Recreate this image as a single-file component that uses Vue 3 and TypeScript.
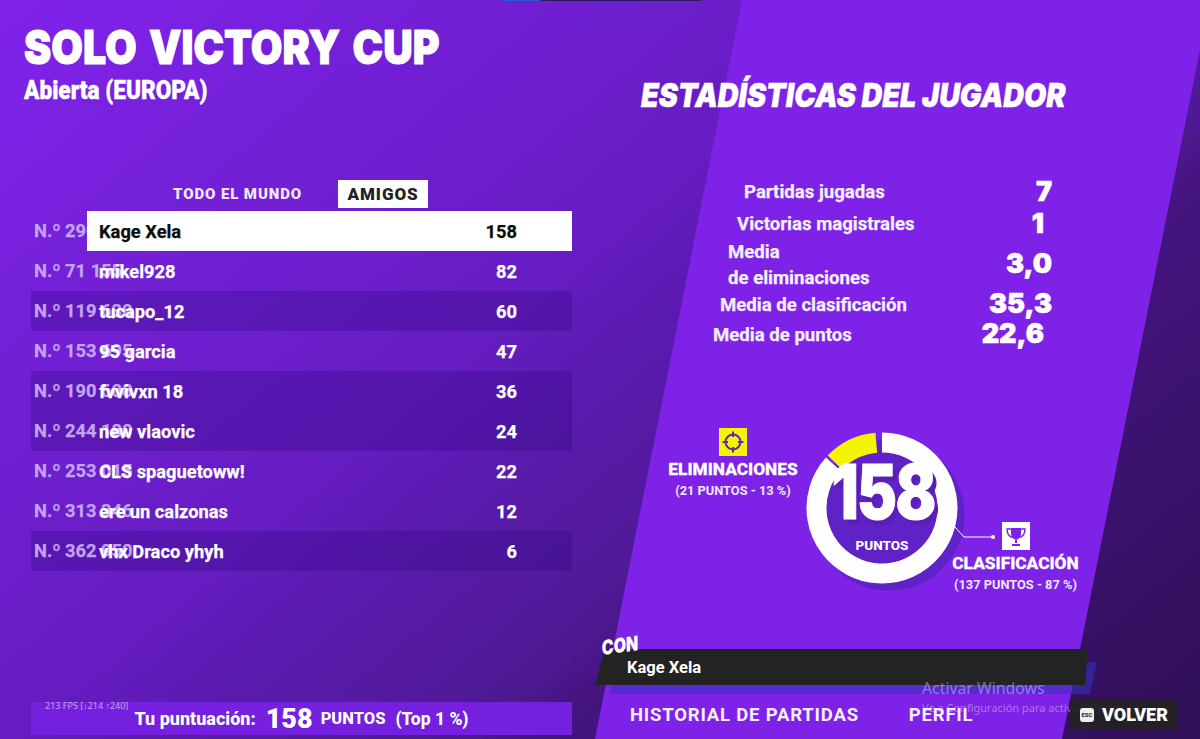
<script setup lang="ts">
interface Row { rank: string; name: string; score: number; dark?: boolean; self?: boolean }
interface Stat { label: string[]; value: string; left: number; right: number; height: number; shift: number }

const rows: Row[] = [
  { rank: 'N.º 290 000', name: 'Kage Xela', score: 158, self: true },
  { rank: 'N.º 71 155', name: 'mikel928', score: 82 },
  { rank: 'N.º 119 630', name: 'tucapo_12', score: 60, dark: true },
  { rank: 'N.º 153 695', name: '95 garcia', score: 47 },
  { rank: 'N.º 190 608', name: 'fvvivxn 18', score: 36, dark: true },
  { rank: 'N.º 244 180', name: 'new vlaovic', score: 24, dark: true },
  { rank: 'N.º 253 015', name: 'CLS spaguetoww!', score: 22 },
  { rank: 'N.º 313 346', name: 'ere un calzonas', score: 12 },
  { rank: 'N.º 362 950', name: 'vhx Draco yhyh', score: 6, dark: true }
]

const stats: Stat[] = [
  { label: ['Partidas jugadas'], value: '7', left: 144, right: 148, height: 32, shift: -1 },
  { label: ['Victorias magistrales'], value: '1', left: 137, right: 156, height: 32, shift: 0 },
  { label: ['Media', 'de eliminaciones'], value: '3,0', left: 128, right: 148, height: 50, shift: -2 },
  { label: ['Media de clasificación'], value: '35,3', left: 120, right: 148, height: 30, shift: -2 },
  { label: ['Media de puntos'], value: '22,6', left: 113, right: 156, height: 30, shift: -2 }
]

const R = 65.5
function polar(deg: number): string {
  const a = ((deg - 90) * Math.PI) / 180
  return `${(80 + R * Math.cos(a)).toFixed(2)} ${(80 + R * Math.sin(a)).toFixed(2)}`
}
function arc(from: number, to: number): string {
  const large = to - from > 180 ? 1 : 0
  return `M${polar(from)} A${R} ${R} 0 ${large} 1 ${polar(to)}`
}
const whiteArc = arc(0, 312)
const yellowArc = arc(314, 355)
</script>

<template>
  <div class="screen">
    <div class="panel"></div>
    <div class="top-strip"><i class="blue"></i><i class="navy"></i></div>

    <section class="left">
      <h1 class="title">SOLO VICTORY CUP</h1>
      <p class="subtitle">Abierta (EUROPA)</p>

      <div class="tabs">
        <span class="tab">TODO EL MUNDO</span>
        <span class="tab active">AMIGOS</span>
      </div>

      <div class="table">
        <div v-for="r in rows" :key="r.name" class="row" :class="{ dark: r.dark, self: r.self }">
          <span class="rank">{{ r.rank }}</span>
          <div class="cells">
            <span class="name">{{ r.name }}</span>
            <span class="score">{{ r.score }}</span>
          </div>
        </div>
      </div>

      <div class="total">
        <span class="fps">213 FPS [↓214 ↑240]</span>
        <span class="t-label">Tu puntuación:</span>
        <span class="t-num">158</span>
        <span class="t-unit">PUNTOS</span>
        <span class="t-top">(Top 1 %)</span>
      </div>
    </section>

    <section class="right">
      <h2 class="heading">ESTADÍSTICAS DEL JUGADOR</h2>

      <div class="stats">
        <div
          v-for="s in stats"
          :key="s.value"
          class="stat"
          :style="{ paddingLeft: s.left + 'px', paddingRight: s.right + 'px', height: s.height + 'px' }"
        >
          <span class="stat-label"><span v-for="l in s.label" :key="l" class="stat-line">{{ l }}</span></span>
          <span class="stat-value" :style="{ marginTop: s.shift + 'px' }">{{ s.value }}</span>
        </div>
      </div>

      <div class="chart">
        <div class="legend elim">
          <svg class="icon yellow" viewBox="0 0 28 28">
            <g fill="none" stroke="#5f2aa8" stroke-width="2">
              <circle cx="14" cy="14" r="7.5" />
              <path d="M14 3.5V9M14 19V24.5M3.5 14H9M19 14H24.5" />
            </g>
          </svg>
          <span class="legend-title">ELIMINACIONES</span>
          <span class="legend-sub">(21 PUNTOS - 13 %)</span>
        </div>

        <div class="donut">
          <svg class="ring" viewBox="0 0 180 180">
            <circle cx="87" cy="87" r="65.5" fill="none" stroke="#5f22c6" stroke-width="20" />
            <circle cx="80" cy="80" r="56" fill="#5f22c6" />
            <path :d="whiteArc" fill="none" stroke="#fff" stroke-width="20" />
            <path :d="yellowArc" fill="none" stroke="#f4f400" stroke-width="20" />
          </svg>
          <span class="donut-num">158</span>
          <span class="donut-unit">PUNTOS</span>
          <svg class="link" viewBox="0 0 42 14">
            <path d="M0 0L9 10H38" fill="none" stroke="#fff" stroke-width="1" />
            <circle cx="38" cy="10" r="2" fill="#fff" />
          </svg>
        </div>

        <div class="legend clas">
          <svg class="icon white" viewBox="0 0 28 28">
            <g fill="#7d22e6">
              <path d="M9 6H19V11C19 15 17 17 14 18C11 17 9 15 9 11Z" />
              <path d="M13 18H15V21H13Z" />
              <path d="M10 22H18V24H10Z" />
            </g>
            <path d="M9 7H5C5 12 7 14.500 10.500 15.500M19 7H23C23 12 21 14.500 17.500 15.500" fill="none" stroke="#7d22e6" stroke-width="1.500" />
          </svg>
          <span class="legend-title">CLASIFICACIÓN</span>
          <span class="legend-sub">(137 PUNTOS - 87 %)</span>
        </div>
      </div>

      <div class="party">
        <div class="party-shadow"></div>
        <div class="party-bar"><span class="party-name">Kage Xela</span></div>
        <span class="party-con">CON</span>
      </div>

      <nav class="nav">
        <span class="nav-item">HISTORIAL DE PARTIDAS</span>
        <span class="nav-item">PERFIL</span>
        <span class="back"><span class="esc">ESC</span>VOLVER</span>
      </nav>
    </section>

    <div class="watermark">
      <span class="wm-title">Activar Windows</span>
      <span class="wm-sub">Ve a Configuración para activar Windows</span>
    </div>
  </div>
</template>

<style>
html, body { margin: 0; background: #3a1170; }
</style>

<style scoped>
.screen {
  position: relative;
  width: 1200px;
  height: 739px;
  overflow: hidden;
  display: grid;
  grid-template-columns: 600px 600px;
  color: #fff;
  font-family: Roboto, "Liberation Sans", sans-serif;
  background: linear-gradient(140deg, #8023ec 0%, #651cc0 43%, #5b1ab0 50%, #4f1a96 63%, #44147f 68.5%, #2e0f55 100%);
}
.panel {
  position: absolute;
  inset: 0;
  background: #7d22e6;
  clip-path: polygon(742px 0, 1210px 0, 1062px 739px, 595px 739px);
}
.top-strip {
  position: absolute;
  top: 0;
  left: 501px;
  display: flex;
  height: 1px;
}
.top-strip .blue { width: 39px; background: #2a5bd0; }
.top-strip .navy { width: 161px; background: #2a1a5e; }

.left {
  position: relative;
  display: flex;
  flex-direction: column;
  height: 739px;
  box-sizing: border-box;
  padding: 19px 28px 4px 31px;
}
.title {
  margin: 0 0 0 -7px;
  font-family: Inter, sans-serif;
  font-size: 47px;
  font-weight: 900;
  line-height: 56px;
  white-space: nowrap;
  word-spacing: 5px;
  transform: scaleX(0.87);
  transform-origin: left center;
  -webkit-text-stroke: 1px #fff;
}
.subtitle {
  margin: 1px 0 0 -7px;
  font-size: 26px;
  font-weight: 900;
  line-height: 28px;
  white-space: nowrap;
  transform: scaleX(0.87);
  transform-origin: left center;
  -webkit-text-stroke: 0.4px #fff;
}
.tabs {
  display: flex;
  align-items: center;
  height: 28px;
  margin-top: 76px;
  margin-bottom: 3px;
  padding-left: 142px;
  gap: 36px;
}
.tab {
  font-size: 15px;
  font-weight: 900;
  letter-spacing: 0.9px;
  color: #f0e6ff;
}
.tab.active {
  display: flex;
  align-items: center;
  justify-content: center;
  width: 90px;
  height: 28px;
  background: #fff;
  color: #222;
  font-size: 17px;
}
.table { display: flex; flex-direction: column; }
.row {
  display: flex;
  align-items: stretch;
  height: 40px;
}
.row.dark { background: rgba(50, 10, 130, 0.32); }
.rank {
  flex: 0 0 53px;
  min-width: 0;
  margin-left: 3px;
  line-height: 40px;
  font-size: 18.300px;
  font-weight: 700;
  white-space: nowrap;
  color: #c3a4f0;
  -webkit-text-stroke: 0.25px #c3a4f0;
}
.cells {
  flex: 1;
  display: flex;
  align-items: center;
  justify-content: space-between;
  padding: 0 55px 0 12px;
  font-size: 18.300px;
  font-weight: 700;
  -webkit-text-stroke: 0.25px currentColor;
}
.self .cells { background: #fff; color: #0c0c0c; }
.name, .score { white-space: nowrap; }
.total {
  position: relative;
  margin-top: auto;
  height: 33px;
  display: flex;
  align-items: center;
  justify-content: center;
  background: #7620df;
  font-weight: 800;
}
.fps {
  position: absolute;
  left: 14px;
  top: -3px;
  font-family: "Noto Sans", sans-serif;
  font-size: 9px;
  font-weight: 400;
  color: #c0a6ea;
}
.t-label { font-size: 18px; }
.t-num { font-size: 27px; font-weight: 900; margin-left: 10px; }
.t-unit { font-size: 16.500px; margin-left: 8px; }
.t-top { font-size: 17.500px; margin-left: 10px; }

.right {
  position: relative;
  display: flex;
  flex-direction: column;
  height: 739px;
}
.heading {
  margin: 74px 0 0 41px;
  font-family: Inter, sans-serif;
  font-size: 33px;
  font-style: italic;
  font-weight: 900;
  line-height: 42px;
  white-space: nowrap;
  transform: scaleX(0.87);
  transform-origin: left center;
  -webkit-text-stroke: 0.5px #fff;
}
.stats {
  display: flex;
  flex-direction: column;
  margin-top: 60px;
}
.stat {
  display: flex;
  align-items: center;
  justify-content: space-between;
}
.stat-label { display: flex; flex-direction: column; }
.stat-line {
  font-size: 18.600px;
  font-weight: 700;
  line-height: 26px;
  white-space: nowrap;
  color: #f5eeff;
  -webkit-text-stroke: 0.25px #f5eeff;
}
.stat-value {
  font-family: Inter, sans-serif;
  font-size: 27px;
  font-weight: 900;
  line-height: 30px;
  -webkit-text-stroke: 0.6px #fff;
}
.chart {
  display: flex;
  align-items: flex-start;
  margin-top: 78px;
  padding-left: 69px;
}
.legend {
  display: flex;
  flex-direction: column;
  align-items: center;
  white-space: nowrap;
}
.icon { width: 28px; height: 28px; display: block; }
.icon.yellow { background: #f4f400; }
.icon.white { background: #fff; }
.legend-title {
  margin-top: 2px;
  font-size: 17.300px;
  font-weight: 800;
  line-height: 22px;
  -webkit-text-stroke: 0.3px #fff;
}
.legend-sub {
  margin-top: 1px;
  font-size: 12.800px;
  font-weight: 700;
  line-height: 20px;
  color: #f0e6ff;
}
.elim { width: 128px; }
.clas { width: 127px; margin: 94px 0 0 -10px; }
.donut {
  position: relative;
  flex: none;
  width: 160px;
  height: 160px;
  margin: 0 0 0 5px;
}
.ring { width: 180px; height: 180px; display: block; }
.donut-num {
  position: absolute;
  left: 2px;
  right: 0;
  top: 28px;
  text-align: center;
  font-family: Inter, sans-serif;
  font-size: 75px;
  font-weight: 900;
  line-height: 72px;
  letter-spacing: -2px;
  transform: scaleX(0.8);
  text-shadow: 5px 5px 0 #5a1db8;
  -webkit-text-stroke: 1px #fff;
}
.donut-unit {
  position: absolute;
  left: 0;
  right: 0;
  top: 109px;
  text-align: center;
  font-size: 13.500px;
  font-weight: 800;
  line-height: 16px;
}
.link {
  position: absolute;
  left: 153px;
  top: 99px;
  width: 42px;
  height: 14px;
}
.party {
  position: absolute;
  left: 0;
  top: 637px;
  width: 600px;
  height: 60px;
}
.party-bar {
  position: absolute;
  left: -5px;
  top: 12px;
  width: 493px;
  height: 36px;
  background: #232323;
  clip-path: polygon(10px 0, 100% 0, 490px 100%, 0 100%);
  display: flex;
  align-items: center;
  padding-left: 32px;
  box-sizing: border-box;
}
.party-shadow {
  position: absolute;
  left: 10px;
  top: 25px;
  width: 487px;
  height: 32px;
  background: rgba(56, 50, 190, 0.55);
  clip-path: polygon(6px 0, 100% 0, 480px 100%, 0 100%);
}
.party-name { font-size: 16.500px; font-weight: 700; }
.party-con {
  position: absolute;
  left: 3px;
  top: 1px;
  font-family: Inter, sans-serif;
  font-size: 20px;
  font-style: italic;
  font-weight: 900;
  transform: rotate(-8deg) scaleX(0.8);
  transform-origin: left bottom;
  line-height: 20px;
}
.nav {
  position: absolute;
  left: 0;
  right: 0;
  top: 700px;
  height: 29px;
  display: flex;
  align-items: center;
  padding-left: 30px;
  gap: 50px;
}
.nav-item {
  font-size: 18.500px;
  font-weight: 700;
  letter-spacing: 0.8px;
  white-space: nowrap;
  color: #f5eeff;
}
.back {
  position: relative;
  z-index: 2;
  margin-left: auto;
  margin-right: 22px;
  width: 108px;
  height: 29px;
  box-sizing: border-box;
  padding-left: 10px;
  display: flex;
  align-items: center;
  gap: 8px;
  background: rgba(34, 34, 34, 0.9);
  font-size: 18px;
  font-weight: 900;
}
.esc {
  width: 14px;
  height: 14px;
  border-radius: 3px;
  background: #eee;
  color: #333;
  font-size: 6px;
  font-weight: 900;
  line-height: 14px;
  text-align: center;
}
.watermark {
  position: absolute;
  left: 922px;
  top: 679px;
  display: flex;
  flex-direction: column;
  font-family: "Noto Sans", sans-serif;
  color: rgba(255, 255, 255, 0.38);
  white-space: nowrap;
}
.wm-title { font-size: 15.800px; line-height: 19px; }
.wm-sub { font-size: 11px; line-height: 19px; }
</style>
